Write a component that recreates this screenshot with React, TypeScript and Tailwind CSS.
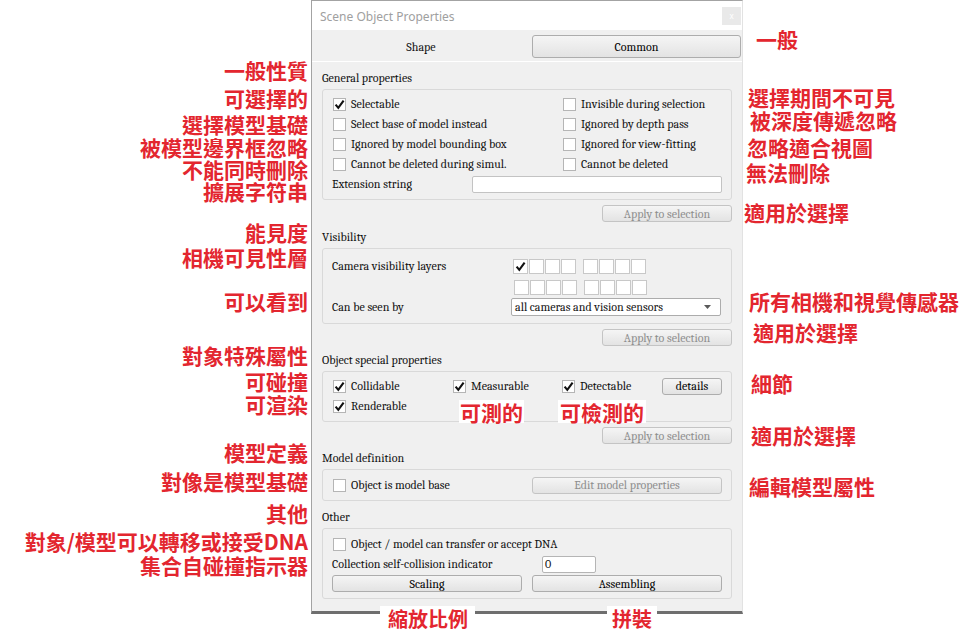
import React from "react"

const RED = "text-[#e3262f]"
const CJK = "font-['Noto_Sans_CJK_TC','Noto_Sans_CJK_SC',sans-serif] font-bold"

const Check = ({ checked }: { checked?: boolean }) => (
  <span className="w-[13px] h-[13px] border border-[#b5b5b5] bg-white flex items-center justify-center shrink-0">
    {checked && (
      <svg width="11" height="11" viewBox="0 0 11 11">
        <path d="M1.6 5.6 L4.3 8.9 L9.6 1.6" fill="none" stroke="#111" strokeWidth="2.1" />
      </svg>
    )}
  </span>
)

type CheckItemProps = { label: string, checked?: boolean, className?: string }
const CheckItem = ({ label, checked, className = "" }: CheckItemProps) => (
  <div className={`flex items-center gap-[5px] ${className}`}>
    <Check checked={checked} />
    <span className="whitespace-nowrap">{label}</span>
  </div>
)

type BtnProps = { text: string, disabled?: boolean, className?: string }
const Btn = ({ text, disabled, className = "" }: BtnProps) => (
  <div
    className={`h-[17px] flex items-center justify-center border rounded-[3px] bg-linear-to-b from-[#f5f5f5] to-[#e3e3e3] ${disabled ? "border-[#c4c4c4] text-[#8e8e8e]" : "border-[#adadad] text-black"} ${className}`}
  >
    {text}
  </div>
)

const GroupLabel = ({ text, className = "" }: { text: string, className?: string }) => (
  <div className={`h-[16px] leading-[16px] ${className}`}>{text}</div>
)

const Box = ({ children, className = "" }: { children: React.ReactNode, className?: string }) => (
  <div className={`border border-[#d9d9d9] rounded-[3px] pl-[10px] pr-[9px] ${className}`}>{children}</div>
)

const leftNotes: [string, string][] = [
  ["一般性質", "mt-[59px]"],
  ["可選擇的", "mt-[6px]"],
  ["選擇模型基礎", "mt-[4px]"],
  ["被模型邊界框忽略", "mt-[1px]"],
  ["不能同時刪除", "mt-0"],
  ["擴展字符串", "mt-0"],
  ["能見度", "mt-[19px]"],
  ["相機可見性層", "mt-[3px]"],
  ["可以看到", "mt-[22px]"],
  ["對象特殊屬性", "mt-[32px]"],
  ["可碰撞", "mt-[4px]"],
  ["可渲染", "mt-[1px]"],
  ["模型定義", "mt-[26px]"],
  ["對像是模型基礎", "mt-[7px]"],
  ["其他", "mt-[10px]"],
  ["對象/模型可以轉移或接受DNA", "mt-[6px]"],
  ["集合自碰撞指示器", "mt-[2px]"],
]

const rightNotes: [string, string][] = [
  ["一般", "mt-[28px] pl-[13px]"],
  ["選擇期間不可見", "mt-[36px] pl-[5px]"],
  ["被深度傳遞忽略", "mt-[1px] pl-[7px]"],
  ["忽略適合視圖", "mt-[5px] pl-[4px]"],
  ["無法刪除", "mt-[3px] pl-[3px]"],
  ["適用於選擇", "mt-[18px] pl-[1px]"],
  ["所有相機和視覺傳感器", "mt-[67px] pl-[6px]"],
  ["適用於選擇", "mt-[9px] pl-[10px]"],
  ["細節", "mt-[29px] pl-[8px]"],
  ["適用於選擇", "mt-[30px] pl-[8px]"],
  ["編輯模型屬性", "mt-[29px] pl-[6px]"],
]

const LayerBoxes = ({ first }: { first?: boolean }) => (
  <div className="flex gap-[7px]">
    {[0, 1].map((g) => (
      <div key={g} className="flex gap-[1px]">
        {[0, 1, 2, 3].map((i) => (
          <span key={i} className="w-[15px] h-[15px] border border-[#c8c8c8] bg-white flex items-center justify-center">
            {first && g === 0 && i === 0 && (
              <svg width="11" height="11" viewBox="0 0 11 11">
                <path d="M1.6 5.6 L4.3 8.9 L9.6 1.6" fill="none" stroke="#111" strokeWidth="2.1" />
              </svg>
            )}
          </span>
        ))}
      </div>
    ))}
  </div>
)

const Dialog = () => {
  return (
    <div className="relative w-[432px] h-[614px] flex flex-col bg-[#f0f0f0] border-l border-t border-[#a3a3a3] border-r border-r-[#e2e2e2] border-b-[3px] border-b-[#6e6e6e] font-serif text-[12px] text-[#111]">
      {/* title bar */}
      <div className="h-[29px] bg-white flex items-center pl-[8px] pr-[1px]">
        <span className="font-['Noto_Sans',sans-serif] text-[12px] text-[#a0a0a0] mt-[2px]">Scene Object Properties</span>
        <span className="ml-auto w-[19px] h-[18px] bg-[#e9e9e9] flex items-center justify-center text-[8px] text-white font-sans">x</span>
      </div>

      {/* tabs */}
      <div className="h-[32px] flex items-start border-b border-white pr-[1px]">
        <div className="w-[218px] h-[23px] mt-[5px] flex items-center justify-center">Shape</div>
        <Btn text="Common" className="ml-[2px] flex-1 h-[23px] mt-[5px] from-[#ececec] to-[#e2e2e2]" />
      </div>

      <div className="flex flex-col px-[10px]">
        {/* General properties */}
        <GroupLabel text="General properties" className="mt-[8px]" />
        <Box className="mt-[3px] pt-[4px] pb-[5px]">
          {[
            ["Selectable", true, "Invisible during selection"],
            ["Select base of model instead", false, "Ignored by depth pass"],
            ["Ignored by model bounding  box", false, "Ignored for view-fitting"],
            ["Cannot be deleted during simul.", false, "Cannot be deleted"],
          ].map(([a, c, b]) => (
            <div key={a as string} className="h-[20px] flex items-center">
              <CheckItem label={a as string} checked={c as boolean} className="w-[230px]" />
              <CheckItem label={b as string} />
            </div>
          ))}
          <div className="h-[20px] flex items-center">
            <span className="w-[140px] -ml-px">Extension string</span>
            <span className="w-[250px] h-[17px] bg-white border border-[#c3c3c3] rounded-[2px]" />
          </div>
        </Box>
        <Btn text="Apply to selection" disabled className="self-end w-[130px] mt-[5px]" />

        {/* Visibility */}
        <GroupLabel text="Visibility" className="mt-[7px]" />
        <Box className="mt-[3px] pt-[8px] pb-[7px]">
          <div className="flex items-center">
            <span className="w-[181px] -ml-px">Camera visibility layers</span>
            <LayerBoxes first />
          </div>
          <div className="flex mt-[5px] pl-[181px]">
            <LayerBoxes />
          </div>
          <div className="flex items-center mt-[3px]">
            <span className="w-[179px] -ml-px">Can be seen by</span>
            <div className="w-[210px] h-[18px] bg-white border border-[#acacac] rounded-[2px] flex items-center pl-[3px] pr-[9px]">
              <span className="whitespace-nowrap">all cameras and vision sensors</span>
              <svg className="ml-auto" width="7" height="4" viewBox="0 0 7 4">
                <path d="M0 0 H7 L3.5 4 Z" fill="#5a5a5a" />
              </svg>
            </div>
          </div>
        </Box>
        <Btn text="Apply to selection" disabled className="self-end w-[130px] mt-[5px]" />

        {/* Object special properties */}
        <GroupLabel text="Object special properties" className="mt-[6px]" />
        <Box className="mt-[3px] pt-[4px] pb-[5px]">
          <div className="h-[20px] flex items-center">
            <CheckItem label="Collidable" checked className="w-[120px]" />
            <CheckItem label="Measurable" checked className="w-[109px]" />
            <CheckItem label="Detectable" checked className="w-[100px]" />
            <Btn text="details" className="w-[60px]" />
          </div>
          <div className="h-[20px] flex items-center">
            <CheckItem label="Renderable" checked />
          </div>
        </Box>
        <Btn text="Apply to selection" disabled className="self-end w-[130px] mt-[5px]" />

        {/* Model definition */}
        <GroupLabel text="Model definition" className="mt-[6px]" />
        <Box className="mt-[3px] pt-[5px] pb-[5px]">
          <div className="h-[20px] flex items-center">
            <CheckItem label="Object is model base" className="w-[199px]" />
            <Btn text="Edit model properties" disabled className="w-[190px]" />
          </div>
        </Box>

        {/* Other */}
        <GroupLabel text="Other" className="mt-[8px]" />
        <Box className="mt-[3px] pt-[5px] pb-[6px]">
          <div className="h-[20px] flex items-center">
            <CheckItem label="Object / model can transfer or accept DNA" />
          </div>
          <div className="h-[20px] flex items-center">
            <span className="w-[210px] -ml-px">Collection self-collision indicator</span>
            <span className="w-[54px] h-[17px] bg-white border border-[#b5b5b5] rounded-[2px] flex items-center pl-[2px]">0</span>
          </div>
          <div className="flex gap-[10px] mt-[1px] -ml-px">
            <Btn text="Scaling" className="w-[190px]" />
            <Btn text="Assembling" className="w-[190px]" />
          </div>
        </Box>
      </div>

      {/* inline annotations over the dialog */}
      <div className={`absolute left-[147px] top-[399px] h-[23px] px-[1px] bg-white flex items-center text-[21px] leading-[22px] ${CJK} ${RED}`}>可測的</div>
      <div className={`absolute left-[246px] top-[399px] h-[23px] px-[2px] bg-white flex items-center text-[21px] leading-[22px] ${CJK} ${RED}`}>可檢測的</div>
      <div className={`absolute left-[68px] top-[605px] h-[26px] pl-[8px] pr-[7px] bg-white flex items-center text-[20px] leading-[22px] ${CJK} ${RED}`}>縮放比例</div>
      <div className={`absolute left-[295px] top-[605px] h-[26px] px-[5px] bg-white flex items-center text-[20px] leading-[22px] ${CJK} ${RED}`}>拼裝</div>
    </div>
  )
}

const App = () => {
  return (
    <div className="w-[970px] h-[631px] bg-white flex overflow-hidden">
      <div className={`w-[311px] flex flex-col items-end pr-[3px] text-[21px] leading-[22px] ${CJK} ${RED}`}>
        {leftNotes.map(([t, c], i) => (
          <div key={i} className={`h-[22px] whitespace-nowrap ${c}`}>{t}</div>
        ))}
      </div>
      <Dialog />
      <div className={`flex-1 flex flex-col text-[21px] leading-[22px] ${CJK} ${RED}`}>
        {rightNotes.map(([t, c], i) => (
          <div key={i} className={`h-[22px] whitespace-nowrap ${c}`}>{t}</div>
        ))}
      </div>
    </div>
  )
}

export default App
